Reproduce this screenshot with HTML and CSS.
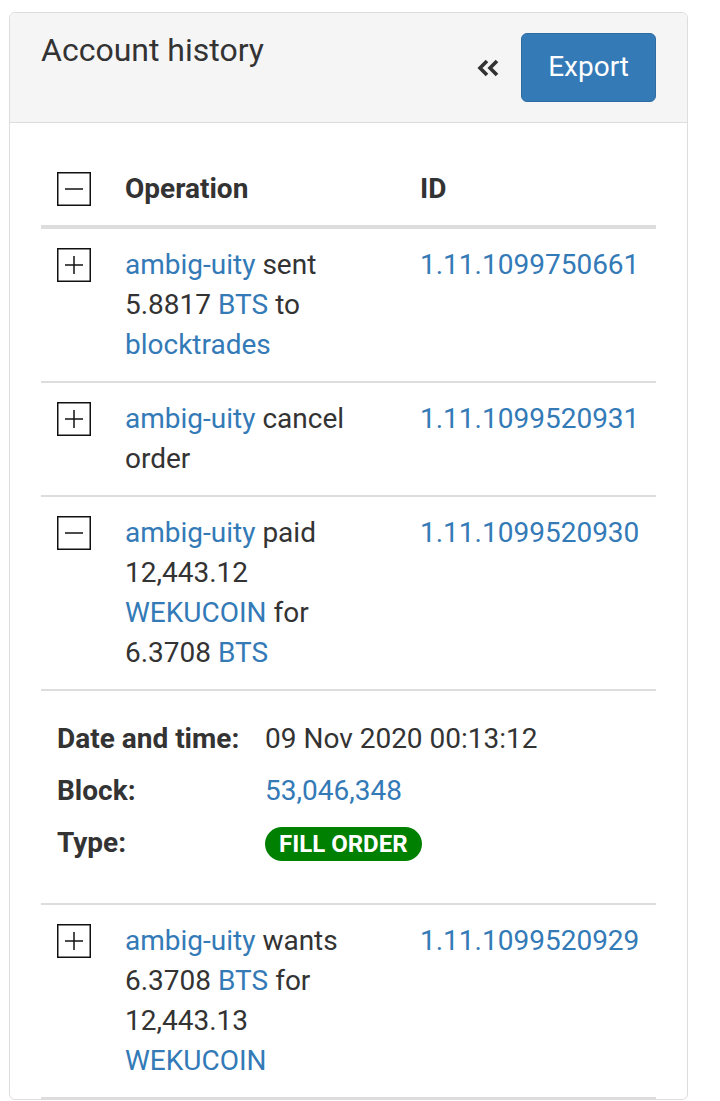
FILE: index.html
```html
<!DOCTYPE html>
<html lang="en">
<head>
  <meta charset="UTF-8">
  <meta name="viewport" content="width=device-width, initial-scale=1.0">
  <title>Account history</title>
  <link rel="stylesheet" href="styles.css">
</head>
<body>
  <div class="panel">
    <div class="panel-heading">
      <h3 class="panel-title">Account history</h3>
      <div class="heading-actions">
        <span class="collapse-icon">
          <svg width="22" height="18" viewBox="0 0 22 18"><polyline points="10,2 3,9 10,16" fill="none" stroke="#333" stroke-width="3.6"/><polyline points="20,2 13,9 20,16" fill="none" stroke="#333" stroke-width="3.6"/></svg>
        </span>
        <button class="btn-export">Export</button>
      </div>
    </div>

    <div class="panel-body">
      <table class="history">
        <thead>
          <tr>
            <th class="col-toggle">
              <svg class="toggle" width="34" height="34" viewBox="0 0 34 34"><rect x="0.75" y="0.75" width="32.5" height="32.5" fill="#fff" stroke="#111" stroke-width="1.5"/><line x1="8" y1="17" x2="26" y2="17" stroke="#111" stroke-width="1.5"/></svg>
            </th>
            <th class="col-op">Operation</th>
            <th class="col-id">ID</th>
          </tr>
        </thead>
        <tbody>
          <tr>
            <td class="col-toggle">
              <svg class="toggle" width="34" height="34" viewBox="0 0 34 34"><rect x="0.75" y="0.75" width="32.5" height="32.5" fill="#fff" stroke="#111" stroke-width="1.5"/><line x1="8" y1="17" x2="26" y2="17" stroke="#111" stroke-width="1.5"/><line x1="17" y1="8" x2="17" y2="26" stroke="#111" stroke-width="1.5"/></svg>
            </td>
            <td><a href="#">ambig-uity</a> sent 5.8817 <a href="#">BTS</a> to <a href="#">blocktrades</a></td>
            <td class="col-id"><a href="#">1.11.1099750661</a></td>
          </tr>
          <tr>
            <td class="col-toggle">
              <svg class="toggle" width="34" height="34" viewBox="0 0 34 34"><rect x="0.75" y="0.75" width="32.5" height="32.5" fill="#fff" stroke="#111" stroke-width="1.5"/><line x1="8" y1="17" x2="26" y2="17" stroke="#111" stroke-width="1.5"/><line x1="17" y1="8" x2="17" y2="26" stroke="#111" stroke-width="1.5"/></svg>
            </td>
            <td><a href="#">ambig-uity</a> cancel order</td>
            <td class="col-id"><a href="#">1.11.1099520931</a></td>
          </tr>
          <tr>
            <td class="col-toggle">
              <svg class="toggle" width="34" height="34" viewBox="0 0 34 34"><rect x="0.75" y="0.75" width="32.5" height="32.5" fill="#fff" stroke="#111" stroke-width="1.5"/><line x1="8" y1="17" x2="26" y2="17" stroke="#111" stroke-width="1.5"/></svg>
            </td>
            <td><a href="#">ambig-uity</a> paid 12,443.12 <a href="#">WEKUCOIN</a> for 6.3708 <a href="#">BTS</a></td>
            <td class="col-id"><a href="#">1.11.1099520930</a></td>
          </tr>
          <tr class="details-row">
            <td colspan="3">
              <div class="details">
                <span class="label">Date and time:</span>
                <span>09 Nov 2020 00:13:12</span>
                <span class="label">Block:</span>
                <span><a href="#">53,046,348</a></span>
                <span class="label">Type:</span>
                <span><span class="badge">FILL ORDER</span></span>
              </div>
            </td>
          </tr>
          <tr>
            <td class="col-toggle">
              <svg class="toggle" width="34" height="34" viewBox="0 0 34 34"><rect x="0.75" y="0.75" width="32.5" height="32.5" fill="#fff" stroke="#111" stroke-width="1.5"/><line x1="8" y1="17" x2="26" y2="17" stroke="#111" stroke-width="1.5"/><line x1="17" y1="8" x2="17" y2="26" stroke="#111" stroke-width="1.5"/></svg>
            </td>
            <td><a href="#">ambig-uity</a> wants 6.3708 <a href="#">BTS</a> for 12,443.13 <a href="#">WEKUCOIN</a></td>
            <td class="col-id"><a href="#">1.11.1099520929</a></td>
          </tr>
        </tbody>
      </table>
    </div>
  </div>
</body>
</html>
```

FILE: styles.css
```css
body {
  font-family: Roboto, "Noto Sans", sans-serif;
  font-size: 28px;
  line-height: 40px;
  color: #333;
  background: #fff;
  margin: 0;
  padding: 12px 32px 0 9px;
}
a {
  color: #337ab7;
  text-decoration: none;
}
.panel {
  border: 1px solid #ddd;
  border-radius: 6px;
  background: #fff;
}
.panel-heading {
  display: flex;
  justify-content: space-between;
  align-items: flex-start;
  padding: 20px 31px 20px 31px;
  background: #f5f5f5;
  border-bottom: 1px solid #ddd;
  border-radius: 6px 6px 0 0;
}
.panel-title {
  margin: 0;
  font-size: 32px;
  font-weight: 400;
  line-height: 34px;
  color: #333;
}
.heading-actions {
  display: flex;
  align-items: center;
  gap: 22px;
}
.collapse-icon {
  display: flex;
}
.btn-export {
  font-family: inherit;
  font-size: 28px;
  line-height: 40px;
  padding: 13px 26px 14px;
  color: #fff;
  background: #337ab7;
  border: 1px solid #2e6da4;
  border-radius: 6px;
}
.panel-body {
  padding: 30px 31px 0 31px;
}
.history {
  width: 100%;
  border-collapse: collapse;
  table-layout: fixed;
}
.history th,
.history td {
  padding: 16px;
  text-align: left;
  vertical-align: top;
  border-top: 2px solid #ddd;
}
.history th {
  font-weight: 700;
  border-top: 0;
  border-bottom: 4px solid #ddd;
}
.history tbody tr:last-child td {
  border-bottom: 2px solid #ddd;
}
.col-toggle {
  width: 36px;
}
.col-op {
  width: 263px;
}
.col-id {
  white-space: nowrap;
}
.toggle {
  display: block;
  margin-top: 3px;
}
.details-row td {
  padding: 22px 16px 34px;
}
.details {
  display: grid;
  grid-template-columns: 208px auto;
  grid-auto-rows: 52px;
  align-items: center;
}
.label {
  font-weight: 700;
}
.badge {
  display: inline-block;
  padding: 0 14px;
  font-size: 24px;
  font-weight: 700;
  line-height: 34px;
  color: #fff;
  background: #008000;
  border-radius: 17px;
}
```
